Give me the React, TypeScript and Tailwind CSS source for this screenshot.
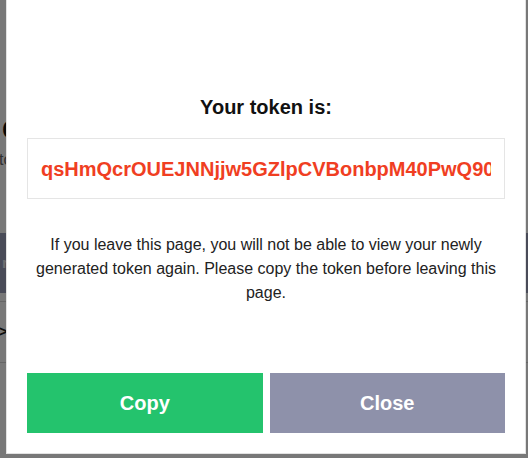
export default function App() {
  return (
    <div
      className="relative w-[528px] h-[458px] overflow-hidden bg-white"
      style={{ fontFamily: '"Liberation Sans", Arial, sans-serif' }}
    >
      {/* page behind the dialog */}
      <div className="flex flex-col">
        <h1 className="mt-[114px] ml-[2px] text-[28px] leading-[32px] font-bold text-[#111]">
          Create token
        </h1>
        <p className="mt-[4px] -ml-[1px] text-[16px] leading-[20px] text-[#666]">
          tokens are used to access the API
        </p>
        <div className="mt-[63px] h-[60px] bg-[#9ba0bc] flex items-center pl-[2px]">
          <span className="text-[15px] font-bold text-[#e8e8ee]">rename</span>
        </div>
        <div className="mt-[8px] border-t border-[#d6d6d6]" />
        <div className="h-[60px] flex items-center -ml-[2px] text-[#222] text-[16px] font-bold">
          &gt;
        </div>
        <div className="border-t border-[#d6d6d6]" />
      </div>

      {/* backdrop */}
      <div className="absolute inset-0 bg-[rgba(0,0,0,0.53)]" />

      {/* dialog */}
      <div className="absolute left-[6px] top-0 w-[520px] h-[454px] bg-white border-l border-r border-b border-[#e2e2e2] flex flex-col px-[20px] pt-[94px]">
        <h2 className="text-center text-[20px] leading-[26px] font-bold text-[#111]">
          Your token is:
        </h2>
        <div className="mt-[18px] h-[61px] border border-[#e5e5e5] flex items-center px-[13px]">
          <div className="w-full min-w-0 overflow-hidden whitespace-nowrap text-[20px] font-bold text-[#f03e22]">
            qsHmQcrOUEJNNjjw5GZlpCVBonbpM40PwQ90mG7xR2aT
          </div>
        </div>
        <p className="mt-[34px] px-[6px] text-center text-[16px] leading-[24px] text-[#222]">
          If you leave this page, you will not be able to view your newly generated token again.
          Please copy the token before leaving this page.
        </p>
        <div className="mt-[68px] grid grid-cols-2 gap-[7px]">
          <button className="h-[60px] bg-[#24c36d] text-white text-[20px] font-bold">Copy</button>
          <button className="h-[60px] bg-[#8e91aa] text-white text-[20px] font-bold">Close</button>
        </div>
      </div>
    </div>
  );
}
